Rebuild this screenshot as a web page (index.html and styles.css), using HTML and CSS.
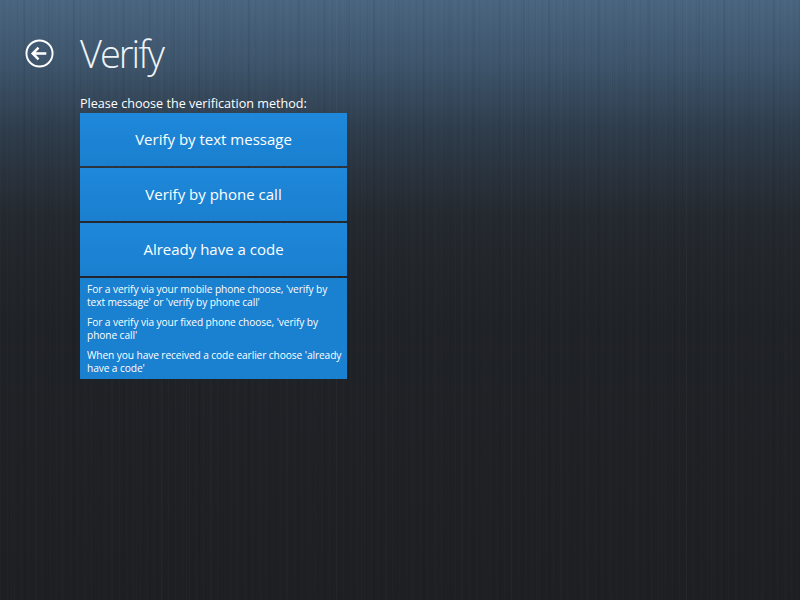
FILE: index.html
```html
<!DOCTYPE html>
<html>
<head>
    <title>Verify</title>
    <link rel="stylesheet" href="styles.css">
</head>
<body>
    <header class="page-header">
        <button class="back-btn" aria-label="Back">
            <svg width="30" height="30" viewBox="0 0 30 30">
                <circle cx="15" cy="15" r="13.5" fill="none" stroke="#fff" stroke-width="2"/>
                <path d="M8 15 H22 M14 9 L8 15 L14 21" fill="none" stroke="#fff" stroke-width="2.6" stroke-linejoin="miter"/>
            </svg>
        </button>
        <h1>Verify</h1>
    </header>

    <main class="verify">
        <div class="prompt">Please choose the verification method:</div>
        <div class="methods">
            <button class="method-btn">Verify by text message</button>
            <button class="method-btn">Verify by phone call</button>
            <button class="method-btn">Already have a code</button>
            <div class="help">
                <p>For a verify via your mobile phone choose, 'verify by text message' or 'verify by phone call'</p>
                <p>For a verify via your fixed phone choose, 'verify by phone call'</p>
                <p>When you have received a code earlier choose 'already have a code'</p>
            </div>
        </div>
    </main>
</body>
</html>
```

FILE: styles.css
```css
html, body {
    height: 100%;
}
body {
    margin: 0;
    color: #fff;
    font-family: 'Open Sans', 'Noto Sans', sans-serif;
    background:
        repeating-linear-gradient(90deg, rgba(255,255,255,0.012) 0 1px, transparent 1px 3px, rgba(0,0,0,0.035) 3px 4px, transparent 4px 7px),
        repeating-linear-gradient(90deg, transparent 0 11px, rgba(255,255,255,0.014) 11px 12px, transparent 12px 23px, rgba(0,0,0,0.045) 23px 25px),
        linear-gradient(180deg, #4a6580 0%, #3e566d 10%, #2e3c4b 22%, #24292f 36%, #1f2226 55%, #1d1f23 100%);
    overflow: hidden;
}
.page-header {
    display: flex;
    align-items: center;
    padding: 31px 0 0 25px;
    height: 45px;
}
.back-btn {
    background: none;
    border: none;
    padding: 0;
    width: 29px;
    height: 29px;
    margin-right: 26px;
    cursor: pointer;
}
.back-btn svg {
    width: 29px;
    height: 29px;
}
.page-header h1 {
    margin: 0;
    font-weight: 300;
    font-size: 38px;
    letter-spacing: -2px;
    color: #eef3f7;
    line-height: 45px;
}
.verify {
    width: 267px;
    margin: 19px 0 0 80px;
}
.prompt {
    font-size: 12.6px;
    line-height: 17px;
    margin-bottom: 1px;
}
.methods {
    display: flex;
    flex-direction: column;
    gap: 2px;
}
.method-btn {
    height: 53px;
    border: none;
    background: linear-gradient(180deg, #1f88da 0%, #1a7fcf 100%);
    color: #fff;
    font-family: inherit;
    font-size: 15px;
    padding: 0 0 2px;
    cursor: pointer;
}
.help {
    background: #1a80d0;
    padding: 5px 0 5px 7px;
    font-size: 10.2px;
    line-height: 12.5px;
    letter-spacing: -0.1px;
}
.help p {
    margin: 0 0 8px;
}
.help p:last-child {
    margin-bottom: 0;
}
```
